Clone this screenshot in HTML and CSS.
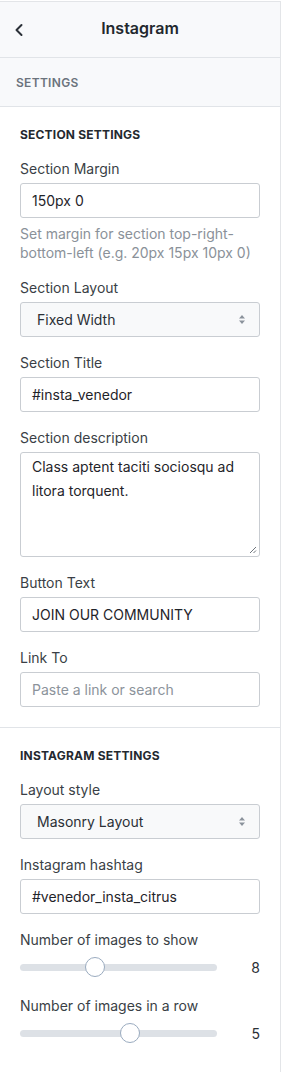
FILE: index.html
```html
<!DOCTYPE html>
<html>
<head>
<meta charset="utf-8">
<link rel="stylesheet" href="styles.css">
</head>
<body>
<div class="panel">
  <div class="header">
    <span class="back"><svg width="10" height="14" viewBox="0 0 10 14"><path d="M7.5 2 L2.5 7 L7.5 12" fill="none" stroke="#2b3138" stroke-width="2" stroke-linecap="round" stroke-linejoin="round"/></svg></span>
    <div class="title">Instagram</div>
  </div>
  <div class="tabbar">SETTINGS</div>

  <div class="section">
    <div class="sec-title">SECTION SETTINGS</div>
    <div class="field">
      <div class="label">Section Margin</div>
      <div class="input">150px 0</div>
      <div class="help">Set margin for section top-right-bottom-left (e.g. 20px 15px 10px 0)</div>
    </div>
    <div class="field">
      <div class="label">Section Layout</div>
      <div class="select"><span>Fixed Width</span><svg class="arrows" width="8" height="11" viewBox="0 0 8 11"><path d="M4 1 L7 4.5 L1 4.5 Z M4 10 L7 6.5 L1 6.5 Z" fill="#8b939c"/></svg></div>
    </div>
    <div class="field">
      <div class="label">Section Title</div>
      <div class="input">#insta_venedor</div>
    </div>
    <div class="field">
      <div class="label">Section description</div>
      <div class="textarea">Class aptent taciti sociosqu ad litora torquent.<svg class="grip" width="8" height="8" viewBox="0 0 8 8"><path d="M7 1 L1 7 M7 4.5 L4.5 7" stroke="#70767d" stroke-width="1"/></svg></div>
    </div>
    <div class="field">
      <div class="label">Button Text</div>
      <div class="input">JOIN OUR COMMUNITY</div>
    </div>
    <div class="field last">
      <div class="label">Link To</div>
      <div class="input placeholder">Paste a link or search</div>
    </div>
  </div>

  <div class="section sec2">
    <div class="sec-title">INSTAGRAM SETTINGS</div>
    <div class="field">
      <div class="label">Layout style</div>
      <div class="select"><span>Masonry Layout</span><svg class="arrows" width="8" height="11" viewBox="0 0 8 11"><path d="M4 1 L7 4.5 L1 4.5 Z M4 10 L7 6.5 L1 6.5 Z" fill="#8b939c"/></svg></div>
    </div>
    <div class="field">
      <div class="label">Instagram hashtag</div>
      <div class="input">#venedor_insta_citrus</div>
    </div>
    <div class="field">
      <div class="label">Number of images to show</div>
      <div class="range-row">
        <div class="track"><div class="thumb" style="left: 65px"></div></div>
        <div class="value">8</div>
      </div>
    </div>
    <div class="field last">
      <div class="label">Number of images in a row</div>
      <div class="range-row">
        <div class="track"><div class="thumb" style="left: 100px"></div></div>
        <div class="value">5</div>
      </div>
    </div>
  </div>
</div>
</body>
</html>
```

FILE: styles.css
```css
* { box-sizing: border-box; }
html, body { margin: 0; padding: 0; background: #ffffff; }
body {
  font-family: Inter, "Noto Sans", "Liberation Sans", sans-serif;
  color: #3a3f46;
  font-size: 14px;
}
.panel {
  width: 281px;
  margin-top: 1px;
  border-top: 1px solid #e3e5e8;
  border-right: 1px solid #e3e5e8;
  border-bottom: 1px solid #e3e5e8;
  background: #ffffff;
}
.header {
  position: relative;
  height: 56px;
  background: #f8f9fb;
  border-bottom: 1px solid #e1e4e8;
  display: flex;
  align-items: center;
  justify-content: center;
}
.back {
  position: absolute;
  left: 14px;
  top: 21px;
  display: flex;
}
.title {
  font-size: 16px;
  font-weight: 600;
  color: #23282e;
  margin-top: -3px;
}
.tabbar {
  height: 49px;
  background: #f8f9fb;
  border-bottom: 1px solid #e1e4e8;
  padding-left: 16px;
  display: flex;
  align-items: center;
  font-size: 12px;
  font-weight: 600;
  letter-spacing: 0.3px;
  color: #6b737d;
}
.section {
  padding: 20px 20px 4px 20px;
  border-bottom: 1px solid #e1e4e8;
}
.sec2 { border-bottom: none; padding-bottom: 11px; }
.sec-title {
  font-size: 12px;
  line-height: 16px;
  font-weight: 700;
  letter-spacing: 0.2px;
  color: #24292f;
  margin-bottom: 16px;
}
.field { margin-bottom: 16px; }
.label {
  font-size: 14px;
  line-height: 20px;
  color: #3a3f46;
  margin-bottom: 4px;
}
.input {
  height: 35px;
  border: 1px solid #c9cdd2;
  border-radius: 3px;
  padding: 0 11px;
  display: flex;
  align-items: center;
  font-size: 14px;
  color: #1f242a;
  background: #fff;
}
.placeholder { color: #8c939b; }
.help {
  margin-top: 6px;
  font-size: 14px;
  line-height: 19px;
  color: #8a9199;
}
.select {
  height: 35px;
  border: 1px solid #c9cdd2;
  border-radius: 3px;
  padding: 0 13px 0 16px;
  display: flex;
  align-items: center;
  justify-content: space-between;
  background: #f8f9fa;
  color: #2b3036;
  font-size: 14px;
}
.textarea {
  position: relative;
  height: 105px;
  border: 1px solid #c9cdd2;
  border-radius: 3px;
  padding: 2px 11px;
  font-size: 14px;
  line-height: 24px;
  color: #1f242a;
}
.grip { position: absolute; right: 2px; bottom: 2px; }
.range-row {
  display: flex;
  align-items: center;
  height: 26px;
  margin-top: 1px;
}
.field.last .range-row { margin-top: 3px; }
.track {
  position: relative;
  width: 197px;
  height: 7px;
  border-radius: 4px;
  background: #dde1e6;
}
.thumb {
  position: absolute;
  top: -7px;
  width: 20px;
  height: 20px;
  border-radius: 50%;
  background: #fff;
  border: 1px solid #9aabbf;
}
.value {
  flex: 1;
  text-align: right;
  font-size: 14px;
  color: #2b3036;
}
```
